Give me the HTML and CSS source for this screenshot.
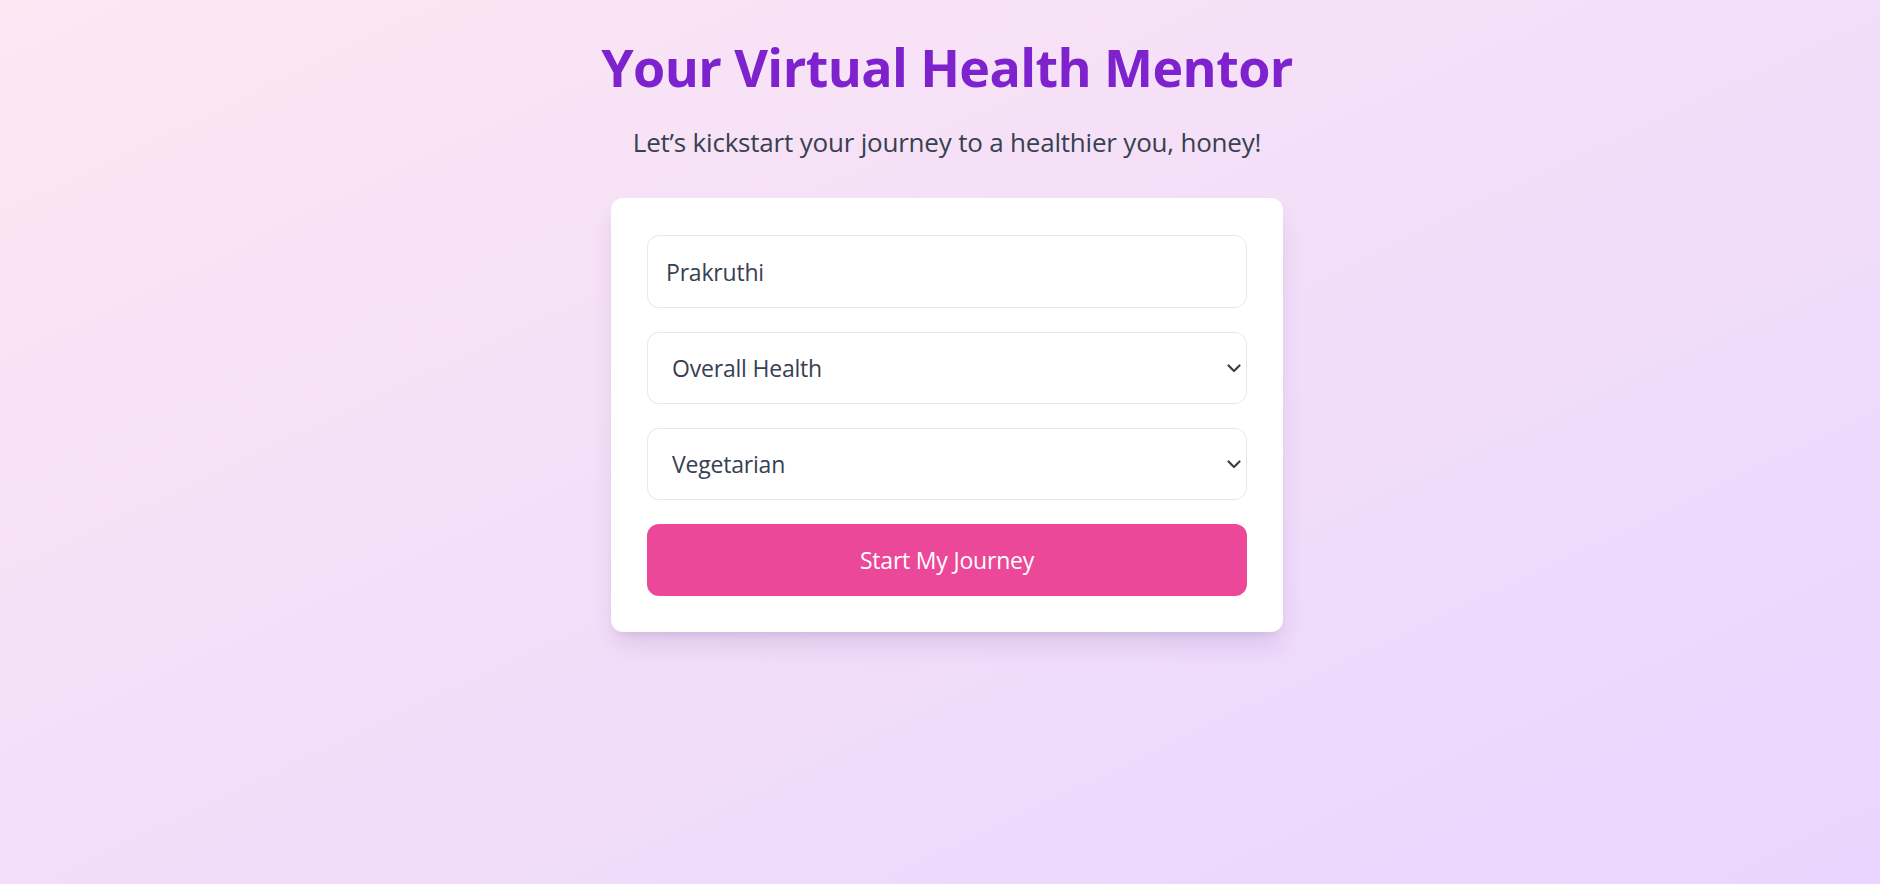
FILE: index.html
```html
<!DOCTYPE html>
<html lang="en">
<head>
<meta charset="utf-8">
<title>Your Virtual Health Mentor</title>
<link rel="stylesheet" href="styles.css">
</head>
<body>
<main class="page">
  <h1 class="title">Your Virtual Health Mentor</h1>
  <p class="subtitle">Let’s kickstart your journey to a healthier you, honey!</p>
  <form class="card">
    <input class="field input" type="text" value="Prakruthi">
    <div class="select-wrap">
      <select class="field select">
        <option>Overall Health</option>
        <option>Weight Loss</option>
        <option>Muscle Gain</option>
      </select>
      <svg class="chev" width="14" height="9" viewBox="0 0 14 9"><path d="M1.5 1.5 L7 7 L12.5 1.5" fill="none" stroke="#374151" stroke-width="2.2" stroke-linecap="round" stroke-linejoin="round"/></svg>
    </div>
    <div class="select-wrap">
      <select class="field select">
        <option>Vegetarian</option>
        <option>Vegan</option>
        <option>Non-Vegetarian</option>
      </select>
      <svg class="chev" width="14" height="9" viewBox="0 0 14 9"><path d="M1.5 1.5 L7 7 L12.5 1.5" fill="none" stroke="#374151" stroke-width="2.2" stroke-linecap="round" stroke-linejoin="round"/></svg>
    </div>
    <button class="btn" type="button">Start My Journey</button>
  </form>
</main>
</body>
</html>
```
FILE: styles.css
```css
* { box-sizing: border-box; }
html, body { margin: 0; padding: 0; }
body {
  min-height: 884px;
  background: linear-gradient(to bottom right, #fce7f3, #e9d5ff);
  font-family: "Open Sans", "Noto Sans", sans-serif;
  color: #374151;
}
.page {
  display: flex;
  flex-direction: column;
  align-items: center;
  padding: 37px 0 0 14px;
}
.title {
  margin: 0;
  font-size: 52px;
  line-height: 60px;
  font-weight: 700;
  letter-spacing: -0.6px;
  color: #7e22ce;
  text-align: center;
}
.subtitle {
  margin: 24px 0 0;
  font-size: 26px;
  line-height: 42px;
  letter-spacing: -0.2px;
  color: #374151;
  text-align: center;
}
.card {
  margin-top: 35px;
  width: 672px;
  background: #fff;
  border-radius: 12px;
  padding: 37px 36px 36px;
  display: flex;
  flex-direction: column;
  gap: 24px;
  box-shadow: 0 15px 24px -4px rgba(80, 40, 110, 0.14), 0 6px 10px -6px rgba(80, 40, 110, 0.12);
}
.field {
  display: block;
  width: 100%;
  height: 72px;
  border: 1px solid #e5e7eb;
  border-radius: 12px;
  background: #fff;
  font-family: inherit;
  font-size: 23px;
  letter-spacing: -0.2px;
  color: #374151;
  outline: none;
}
.input {
  height: 73px;
  padding: 0 18px;
}
.select-wrap {
  position: relative;
}
.select {
  appearance: none;
  -webkit-appearance: none;
  padding: 0 40px 0 24px;
}
.chev {
  position: absolute;
  right: 6px;
  top: 32px;
  pointer-events: none;
}
.btn {
  height: 72px;
  border: none;
  border-radius: 12px;
  background: #ec4899;
  color: #fff;
  font-family: inherit;
  font-size: 23px;
  letter-spacing: -0.2px;
  cursor: pointer;
}
```
